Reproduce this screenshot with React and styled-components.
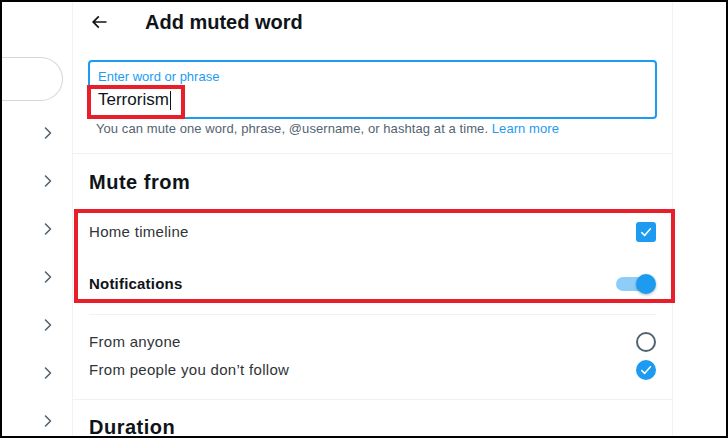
import React from "react";
import styled, { createGlobalStyle } from "styled-components";

const GlobalStyle = createGlobalStyle`
    * {
        box-sizing: border-box;
    }
    body {
        margin: 0;
        background: #fff;
        font-family: "Liberation Sans", Arial, sans-serif;
        color: #0f1419;
    }
`;

const navItems = [1, 2, 3, 4, 5, 6, 7];

const muteFrom = [
    { id: "home", label: "Home timeline", control: "checkbox", bold: false },
    { id: "notif", label: "Notifications", control: "toggle", bold: true },
];

const audience = [
    { id: "anyone", label: "From anyone", checked: false },
    { id: "nofollow", label: "From people you don\u2019t follow", checked: true },
];

function Chevron() {
    return (
        <svg width="18" height="18" viewBox="0 0 18 18" fill="none">
            <path
                d="M6.5 4l5 5-5 5"
                stroke="#536471"
                strokeWidth="1.6"
                strokeLinecap="round"
                strokeLinejoin="round"
            />
        </svg>
    );
}

function BackArrow() {
    return (
        <svg width="20" height="20" viewBox="0 0 24 24">
            <path
                fill="#0f1419"
                d="M7.414 13l5.043 5.04-1.414 1.42L3.586 12l7.457-7.46 1.414 1.42L7.414 11H21v2H7.414z"
            />
        </svg>
    );
}

function Check() {
    return (
        <svg width="20" height="20" viewBox="0 0 20 20" fill="none">
            <path
                d="M5.8 10.6l2.8 2.8 5.8-6.6"
                stroke="#fff"
                strokeWidth="1.5"
                strokeLinecap="round"
                strokeLinejoin="round"
            />
        </svg>
    );
}

function App() {
    return (
        <>
            <GlobalStyle />
            <Frame>
                <Sidebar>
                    <SearchPill />
                    <NavList>
                        {navItems.map((item) => (
                            <NavRow key={item}>
                                <Chevron />
                            </NavRow>
                        ))}
                    </NavList>
                </Sidebar>
                <Main>
                    <Header>
                        <BackButton>
                            <BackArrow />
                        </BackButton>
                        <Title>Add muted word</Title>
                    </Header>
                    <InputSection>
                        <InputBox>
                            <InputLabel>Enter word or phrase</InputLabel>
                            <InputValue>
                                Terrorism
                                <Caret />
                            </InputValue>
                            <ValueMark />
                        </InputBox>
                        <Helper>
                            You can mute one word, phrase, @username, or hashtag
                            at a time. <Link>Learn more</Link>
                        </Helper>
                    </InputSection>
                    <Section>
                        <Heading>Mute from</Heading>
                        <MarkedGroup>
                            {muteFrom.map((item) => (
                                <SettingRow key={item.id}>
                                    <RowLabel bold={item.bold}>
                                        {item.label}
                                    </RowLabel>
                                    {item.control === "checkbox" ? (
                                        <Checkbox>
                                            <Check />
                                        </Checkbox>
                                    ) : (
                                        <Toggle>
                                            <Track />
                                            <Knob />
                                        </Toggle>
                                    )}
                                </SettingRow>
                            ))}
                        </MarkedGroup>
                        <Divider />
                        <RadioList>
                            {audience.map((item) => (
                                <RadioRow key={item.id}>
                                    <RowLabel>{item.label}</RowLabel>
                                    <Radio checked={item.checked}>
                                        {item.checked && <Check />}
                                    </Radio>
                                </RadioRow>
                            ))}
                        </RadioList>
                    </Section>
                    <DurationSection>
                        <Heading>Duration</Heading>
                    </DurationSection>
                </Main>
                <RightSide />
            </Frame>
        </>
    );
}

export default App;

const Frame = styled.div`
    width: 728px;
    height: 438px;
    border: 2px solid #000;
    display: flex;
    overflow: hidden;
    background: #fff;
`;
const Sidebar = styled.div`
    width: 71px;
    flex-shrink: 0;
    border-right: 1px solid #eff3f4;
`;
const SearchPill = styled.div`
    margin-top: 55px;
    width: 61px;
    height: 44px;
    border: 1px solid #cfd9de;
    border-left: none;
    border-radius: 0 22px 22px 0;
`;
const NavList = styled.div`
    margin-top: 8px;
    display: flex;
    flex-direction: column;
`;
const NavRow = styled.div`
    height: 48px;
    display: flex;
    align-items: center;
    justify-content: flex-end;
    padding-right: 15px;
`;
const Main = styled.div`
    width: 600px;
    flex-shrink: 0;
    border-right: 1px solid #eff3f4;
    display: flex;
    flex-direction: column;
`;
const Header = styled.div`
    height: 40px;
    padding: 0 16px;
    display: flex;
    align-items: center;
    flex-shrink: 0;
`;
const BackButton = styled.div`
    width: 56px;
    display: flex;
    align-items: center;
`;
const Title = styled.h2`
    margin: 0;
    font-size: 20px;
    line-height: 24px;
    font-weight: 700;
    color: #0f1419;
`;
const InputSection = styled.div`
    padding: 18px 15px 16px;
    border-bottom: 1px solid #eff3f4;
    flex-shrink: 0;
`;
const InputBox = styled.div`
    position: relative;
    height: 59px;
    border: 2px solid #1d9bf0;
    border-radius: 4px;
    padding: 7px 8px 0;
`;
const InputLabel = styled.div`
    font-size: 13px;
    line-height: 16px;
    color: #1d9bf0;
`;
const InputValue = styled.div`
    margin-top: 3px;
    font-size: 17px;
    line-height: 24px;
    color: #0f1419;
    display: flex;
    align-items: center;
`;
const Caret = styled.span`
    display: inline-block;
    width: 0;
    height: 19px;
    border-left: 1px solid #0f1419;
    margin-left: 1px;
`;
const ValueMark = styled.div`
    position: absolute;
    left: -3px;
    top: 23px;
    width: 98px;
    height: 34px;
    border: 4px solid #e81f2a;
    pointer-events: none;
`;
const Helper = styled.p`
    margin: 0;
    padding: 2px 8px 0;
    font-size: 13px;
    line-height: 16px;
    letter-spacing: 0.08px;
    color: #536471;
`;
const Link = styled.span`
    color: #1d9bf0;
`;
const Section = styled.div`
    padding: 16px 0 15px;
    border-bottom: 1px solid #eff3f4;
    flex-shrink: 0;
`;
const Heading = styled.h3`
    margin: 0;
    padding: 0 16px;
    font-size: 20px;
    line-height: 24px;
    font-weight: 700;
    letter-spacing: 0.5px;
    color: #0f1419;
`;
const MarkedGroup = styled.div`
    position: relative;
    margin-top: 12px;
    &::after {
        content: "";
        position: absolute;
        top: 3px;
        bottom: 7px;
        left: 1px;
        right: -3px;
        border: 4px solid #e81f2a;
        pointer-events: none;
    }
`;
const SettingRow = styled.div`
    display: flex;
    align-items: center;
    justify-content: space-between;
    padding: 16px 16px;
    height: 52px;
`;
const RowLabel = styled.span`
    font-size: 15px;
    line-height: 20px;
    font-weight: ${(props) => (props.bold ? 700 : 400)};
    letter-spacing: ${(props) => (props.bold ? "0.2px" : "0.3px")};
    color: ${(props) => (props.bold ? "#0f1419" : "#2f3438")};
`;
const Checkbox = styled.div`
    width: 20px;
    height: 20px;
    border-radius: 3px;
    background: #1d9bf0;
    display: flex;
    align-items: center;
    justify-content: center;
`;
const Toggle = styled.div`
    position: relative;
    width: 40px;
    height: 20px;
`;
const Track = styled.div`
    position: absolute;
    left: 0;
    right: 4px;
    top: 3px;
    height: 14px;
    border-radius: 7px;
    background: #8ecdf8;
`;
const Knob = styled.div`
    position: absolute;
    right: 0;
    top: 0;
    width: 20px;
    height: 20px;
    border-radius: 50%;
    background: #1d9bf0;
    box-shadow: 0 1px 3px rgba(0, 0, 0, 0.3);
`;
const Divider = styled.div`
    margin: 4px 16px 0;
    height: 1px;
    background: #eff3f4;
`;
const RadioList = styled.div`
    padding-top: 13px;
`;
const RadioRow = styled.div`
    display: flex;
    align-items: center;
    justify-content: space-between;
    padding: 4px 16px;
`;
const Radio = styled.div`
    width: 20px;
    height: 20px;
    border-radius: 50%;
    border: ${(props) => (props.checked ? "none" : "2px solid #536471")};
    background: ${(props) => (props.checked ? "#1d9bf0" : "transparent")};
    display: flex;
    align-items: center;
    justify-content: center;
`;
const DurationSection = styled.div`
    padding-top: 15px;
`;
const RightSide = styled.div`
    flex: 1;
`;
